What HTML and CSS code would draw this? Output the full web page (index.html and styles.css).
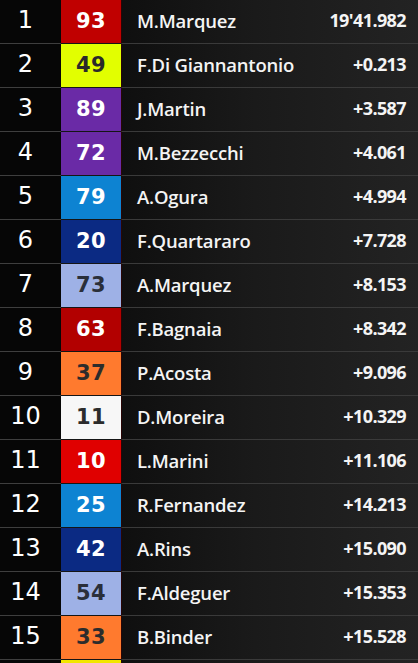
FILE: index.html
```html
<!DOCTYPE html>
<html>
<head>
<meta charset="utf-8">
<link rel="stylesheet" href="styles.css">
</head>
<body>
<div class="board">
  <div class="row"><div class="pos">1</div><div class="num c-red">93</div><div class="info"><span class="name">M.Marquez</span><span class="time">19'41.982</span></div></div>
  <div class="row"><div class="pos">2</div><div class="num c-lime">49</div><div class="info"><span class="name">F.Di Giannantonio</span><span class="time">+0.213</span></div></div>
  <div class="row"><div class="pos">3</div><div class="num c-purple">89</div><div class="info"><span class="name">J.Martin</span><span class="time">+3.587</span></div></div>
  <div class="row"><div class="pos">4</div><div class="num c-purple">72</div><div class="info"><span class="name">M.Bezzecchi</span><span class="time">+4.061</span></div></div>
  <div class="row"><div class="pos">5</div><div class="num c-blue">79</div><div class="info"><span class="name">A.Ogura</span><span class="time">+4.994</span></div></div>
  <div class="row"><div class="pos">6</div><div class="num c-navy">20</div><div class="info"><span class="name">F.Quartararo</span><span class="time">+7.728</span></div></div>
  <div class="row"><div class="pos">7</div><div class="num c-lav">73</div><div class="info"><span class="name">A.Marquez</span><span class="time">+8.153</span></div></div>
  <div class="row"><div class="pos">8</div><div class="num c-dred">63</div><div class="info"><span class="name">F.Bagnaia</span><span class="time">+8.342</span></div></div>
  <div class="row"><div class="pos">9</div><div class="num c-orange">37</div><div class="info"><span class="name">P.Acosta</span><span class="time">+9.096</span></div></div>
  <div class="row"><div class="pos">10</div><div class="num c-white">11</div><div class="info"><span class="name">D.Moreira</span><span class="time">+10.329</span></div></div>
  <div class="row"><div class="pos">11</div><div class="num c-bred">10</div><div class="info"><span class="name">L.Marini</span><span class="time">+11.106</span></div></div>
  <div class="row"><div class="pos">12</div><div class="num c-blue">25</div><div class="info"><span class="name">R.Fernandez</span><span class="time">+14.213</span></div></div>
  <div class="row"><div class="pos">13</div><div class="num c-navy">42</div><div class="info"><span class="name">A.Rins</span><span class="time">+15.090</span></div></div>
  <div class="row"><div class="pos">14</div><div class="num c-lav">54</div><div class="info"><span class="name">F.Aldeguer</span><span class="time">+15.353</span></div></div>
  <div class="row"><div class="pos">15</div><div class="num c-orange">33</div><div class="info"><span class="name">B.Binder</span><span class="time">+15.528</span></div></div>
  <div class="row"><div class="pos"></div><div class="num c-yellow"></div><div class="info"></div></div>
</div>
</body>
</html>
```

FILE: styles.css
```css
html, body {
  margin: 0;
  padding: 0;
  background: #000;
  overflow: hidden;
  height: 663px;
}
.board {
  display: flex;
  flex-direction: column;
  width: 418px;
}
.row {
  display: grid;
  grid-template-columns: 61px 60px 1fr;
  height: 44px;
  flex: 0 0 44px;
}
.pos {
  background: #060606;
  border-bottom: 1px solid #3e3e3e;
  color: #ffffff;
  font-family: "DejaVu Sans", sans-serif;
  font-weight: 400;
  font-size: 24px;
  display: flex;
  align-items: center;
  justify-content: center;
  padding: 0 10px 3px 0;
}
.num {
  border-bottom: 1px solid #151515;
  font-family: "DejaVu Sans", sans-serif;
  font-weight: 700;
  font-size: 21px;
  letter-spacing: 0.5px;
  display: flex;
  align-items: center;
  justify-content: center;
  color: #fff;
  padding-bottom: 2px;
}
.info {
  background: linear-gradient(to right, #0f0f0f 0%, #1a1a1a 45%, #232323 100%);
  border-bottom: 1px solid #3a3a3a;
  border-left: 1px solid #2a0606;
  display: flex;
  align-items: center;
  justify-content: space-between;
  padding: 0 12px 3px 15px;
  font-family: "Open Sans", sans-serif;
  color: #f4f4f4;
}
.name {
  font-size: 18.5px;
  font-weight: 600;
  letter-spacing: -0.2px;
}
.time {
  font-size: 18px;
  font-weight: 700;
  letter-spacing: -0.6px;
}
.c-red { background: #c00000; }
.c-dred { background: #b20000; }
.c-bred { background: #e00000; }
.c-lime { background: #e2ff00; color: #2a2a2a; }
.c-purple { background: #6a2aa6; }
.c-blue { background: #0d83d2; }
.c-navy { background: #0b2a83; }
.c-lav { background: #9eb1e6; color: #2a2f3a; }
.c-orange { background: #ff7a2e; color: #2c2c2c; }
.c-white { background: #f7f7f7; color: #2c2c2c; }
.c-yellow { background: #f2e600; }
```
